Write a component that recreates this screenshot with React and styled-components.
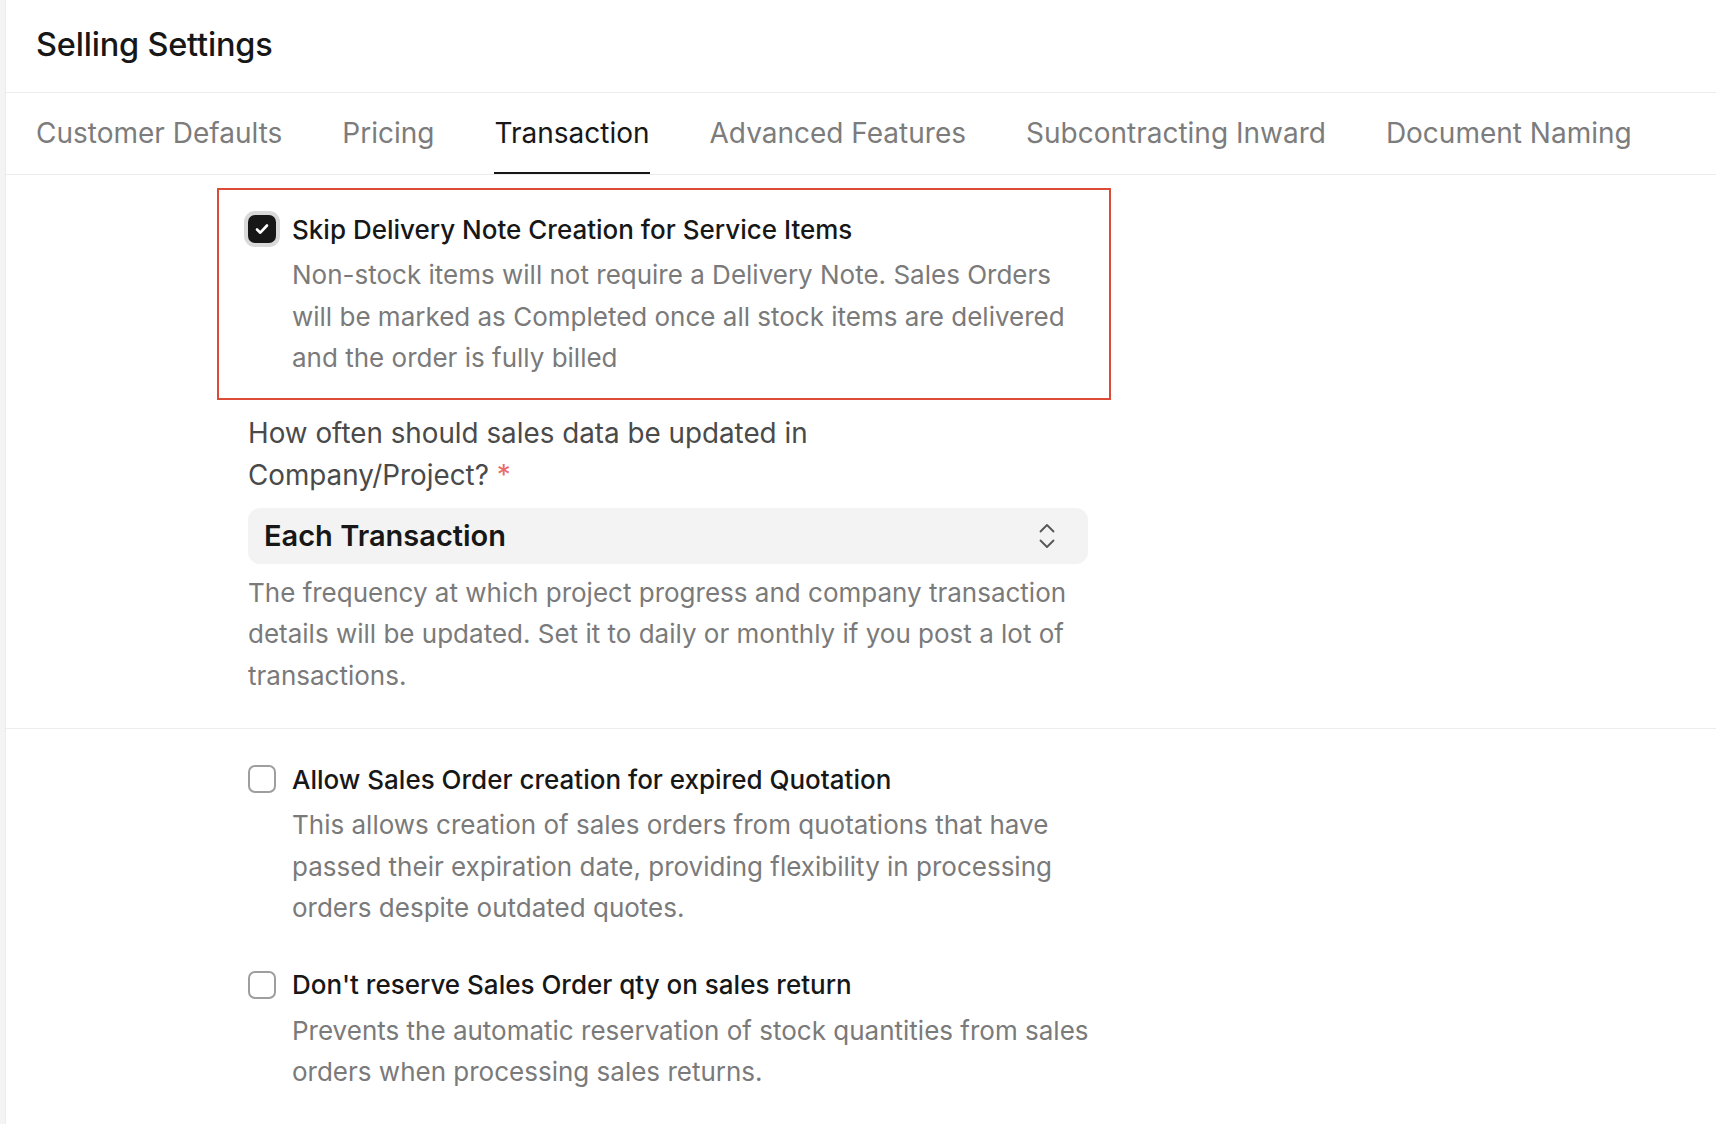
import React from 'react';
import styled, { createGlobalStyle } from 'styled-components';

const GlobalStyle = createGlobalStyle`
  * { box-sizing: border-box; }
  body {
    margin: 0;
    background: #ffffff;
    font-family: Inter, "Noto Sans", sans-serif;
    color: #171717;
  }
`;

const tabs = [
  'Customer Defaults',
  'Pricing',
  'Transaction',
  'Advanced Features',
  'Subcontracting Inward',
  'Document Naming',
];

const Page = styled.div`
  display: flex;
  min-height: 100vh;
`;

const Rail = styled.div`
  width: 6px;
  flex-shrink: 0;
  background: #f4f4f4;
  border-right: 1px solid #ececec;
`;

const Main = styled.div`
  flex: 1;
  min-width: 0;
`;

const Header = styled.header`
  height: 93px;
  display: flex;
  align-items: center;
  padding: 0 0 4px 30px;
  border-bottom: 1px solid #ededed;
`;

const Title = styled.h1`
  margin: 0;
  font-size: 32.5px;
  font-weight: 500;
  letter-spacing: -0.2px;
  color: #171717;
`;

const TabBar = styled.nav`
  height: 82px;
  display: flex;
  gap: 60px;
  padding-left: 30px;
  border-bottom: 1px solid #ededed;
`;

const Tab = styled.div`
  display: flex;
  align-items: center;
  font-size: 28px;
  color: ${(p) => (p.$active ? '#171717' : '#7c7c7c')};
  border-bottom: 2px solid ${(p) => (p.$active ? '#171717' : 'transparent')};
`;

const Section = styled.section`
  padding: ${(p) => p.$pad};
  border-bottom: ${(p) => (p.$divided ? '1px solid #ededed' : 'none')};
`;

const Column = styled.div`
  margin-left: 242px;
  width: 842px;
  display: flex;
  flex-direction: column;
  gap: ${(p) => p.$gap || 0}px;
`;

const Highlight = styled.div`
  margin-left: -31px;
  margin-right: -21px;
  padding: 22px 21px 19px 29px;
  border: 2px solid #dc4a38;
`;

const CheckRow = styled.label`
  display: flex;
  align-items: center;
  gap: 16px;
  height: 34px;
`;

const Box = styled.span`
  width: 28px;
  height: 28px;
  flex-shrink: 0;
  border-radius: 7px;
  display: flex;
  align-items: center;
  justify-content: center;
  background: ${(p) => (p.$checked ? '#171717' : '#ffffff')};
  border: ${(p) => (p.$checked ? 'none' : '2px solid #9e9e9e')};
  box-shadow: ${(p) => (p.$checked ? '0 0 0 4px #d9d9d9' : 'none')};
`;

const Label = styled.span`
  font-size: 26px;
  font-weight: 500;
  color: #171717;
`;

const Description = styled.p`
  margin: 8px 0 0;
  padding-left: ${(p) => (p.$indent ? '44px' : '0')};
  font-size: 26px;
  line-height: 41.5px;
  color: #7a7a7a;
`;

const Field = styled.div`
  margin-top: 12px;
`;

const FieldLabel = styled.div`
  font-size: 27.8px;
  line-height: 42px;
  color: #4a4a4a;
  padding-right: 70px;
`;

const NoWrap = styled.span`
  white-space: nowrap;
`;

const Required = styled.span`
  color: #e86a6a;
  margin-left: 8px;
`;

const Select = styled.div`
  margin-top: 12px;
  width: 840px;
  height: 56px;
  border-radius: 12px;
  background: #f3f3f3;
  display: flex;
  align-items: center;
  justify-content: space-between;
  padding: 0 33px 0 16px;
  font-size: 29px;
  font-weight: 600;
  color: #171717;
`;

const Check = () => (
  <svg width="18" height="18" viewBox="0 0 18 18" fill="none">
    <path d="M4 9.5l3.3 3.2L14 5.5" stroke="#fff" strokeWidth="2.6" strokeLinecap="round" strokeLinejoin="round" />
  </svg>
);

const UpDown = () => (
  <svg width="16" height="26" viewBox="0 0 16 26" fill="none">
    <path d="M1.5 8.5L8 2l6.5 6.5M1.5 17.5L8 24l6.5-6.5" stroke="#555" strokeWidth="1.8" strokeLinecap="round" strokeLinejoin="round" />
  </svg>
);

const Checkbox = ({ checked, label, children }) => (
  <div>
    <CheckRow>
      <Box $checked={checked}>{checked && <Check />}</Box>
      <Label>{label}</Label>
    </CheckRow>
    <Description $indent>{children}</Description>
  </div>
);

export default function App() {
  return (
    <Page>
      <GlobalStyle />
      <Rail />
      <Main>
        <Header>
          <Title>Selling Settings</Title>
        </Header>
        <TabBar>
          {tabs.map((t) => (
            <Tab key={t} $active={t === 'Transaction'}>{t}</Tab>
          ))}
        </TabBar>

        <Section $pad="13px 0 32px" $divided>
          <Column>
            <Highlight>
              <Checkbox checked label="Skip Delivery Note Creation for Service Items">
                Non-stock items will not require a Delivery Note. Sales Orders will be marked as
                Completed once all stock items are delivered and the order is fully billed
              </Checkbox>
            </Highlight>
            <Field>
              <FieldLabel>
                How often should sales data be updated in{' '}
                <NoWrap>
                  Company/Project?<Required>*</Required>
                </NoWrap>
              </FieldLabel>
              <Select>
                <span>Each Transaction</span>
                <UpDown />
              </Select>
              <Description>
                The frequency at which project progress and company transaction details will be
                updated. Set it to daily or monthly if you post a lot of transactions.
              </Description>
            </Field>
          </Column>
        </Section>

        <Section $pad="33px 0 40px">
          <Column $gap={39}>
            <Checkbox label="Allow Sales Order creation for expired Quotation">
              This allows creation of sales orders from quotations that have passed their
              expiration date, providing flexibility in processing orders despite outdated quotes.
            </Checkbox>
            <Checkbox label="Don't reserve Sales Order qty on sales return">
              Prevents the automatic reservation of stock quantities from sales orders when
              processing sales returns.
            </Checkbox>
          </Column>
        </Section>
      </Main>
    </Page>
  );
}
